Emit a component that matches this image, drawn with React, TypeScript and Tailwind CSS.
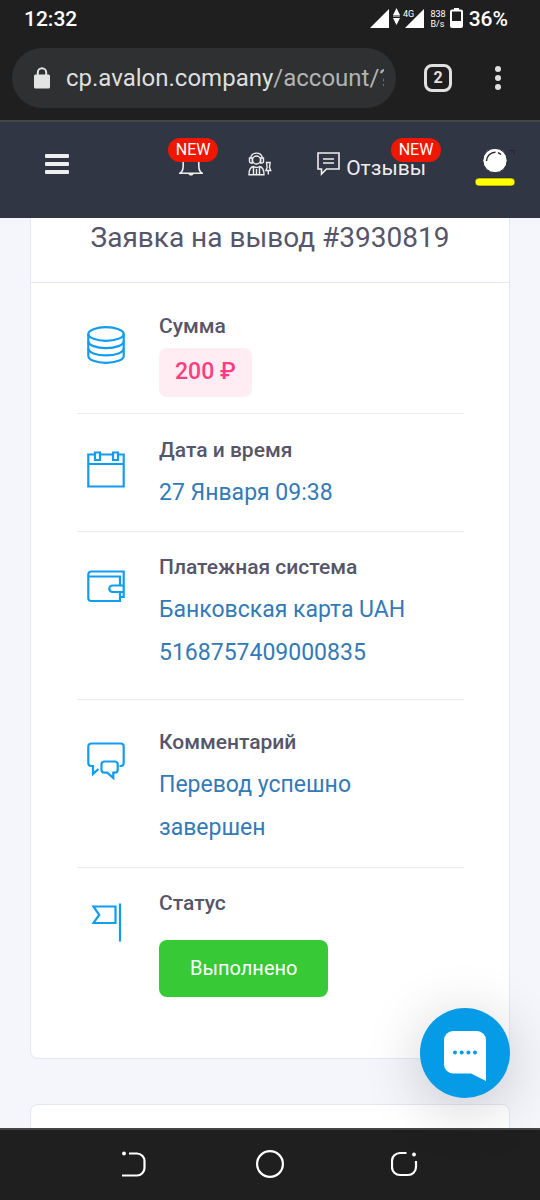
import type { ReactNode } from 'react';

const rowTitle = 'text-[21px] leading-7 font-medium text-[#575569]';
const rowValue = 'mt-[7px] text-[23px] leading-[43px] text-[#337ab7]';

function StatusBar() {
  return (
    <div className="flex h-[38px] items-center justify-between pr-8 pl-6 text-white">
      <span className="text-[21px] leading-6 font-medium">12:32</span>
      <div className="flex items-center">
        <svg width="56" height="22" viewBox="0 0 56 22" fill="currentColor">
          <path d="M0 20 19 1v19z" />
          <path d="M26.500 0 30 7h-7zM26.500 17 23 10h7zM23 7.500h7v1h-7z" />
          <path d="M35 20 54 1v19z" />
          <text x="33" y="9" fontSize="9" stroke="#1f1f1f" strokeWidth="2" paintOrder="stroke">
            4G
          </text>
        </svg>
        <span className="ml-1 flex flex-col text-[9px] leading-[10px]">
          <span>838</span>
          <span>B/s</span>
        </span>
        <svg className="ml-1" width="13" height="24" viewBox="0 0 13 24">
          <path d="M4 1h5v2H4z" fill="#fff" />
          <rect x="1" y="3.500" width="11" height="16.500" rx="1" fill="none" stroke="#fff" strokeWidth="2" />
          <path d="M1 14h11v6H1z" fill="#fff" />
        </svg>
        <span className="ml-[6px] text-[21px] leading-6 font-medium">36%</span>
      </div>
    </div>
  );
}

function BrowserBar() {
  return (
    <div className="flex h-[82px] items-center pr-7 pb-[2px] pl-3">
      <button
        type="button"
        className="flex h-[60px] min-w-0 flex-1 items-center rounded-full bg-[#2f3032] pr-3 pl-[22px] text-left"
      >
        <svg className="shrink-0" width="16" height="22" viewBox="0 0 16 22">
          <rect y="7.500" width="16" height="14" rx="1.500" fill="#e3e3e3" />
          <path d="M3.800 8V5.500a4.200 4.200 0 0 1 8.400 0V8" fill="none" stroke="#e3e3e3" strokeWidth="2" />
        </svg>
        <span className="ml-4 overflow-hidden text-2xl whitespace-nowrap text-[#dedede]">
          cp.avalon.company<span className="text-[#b3b3b3]">/account/?</span>
        </span>
      </button>
      <button
        type="button"
        className="ml-7 flex h-7 w-7 items-center justify-center rounded-lg border-3 border-[#e0e0e0] text-base leading-none font-bold text-[#e0e0e0]"
      >
        2
      </button>
      <button type="button" aria-label="Меню браузера" className="ml-8 flex w-7 justify-center">
        <svg width="6" height="24" viewBox="0 0 6 24" fill="#e0e0e0">
          <circle cx="3" cy="3" r="3" />
          <circle cx="3" cy="12" r="3" />
          <circle cx="3" cy="21" r="3" />
        </svg>
      </button>
    </div>
  );
}

function NewBadge({ className }: { className: string }) {
  return (
    <span
      className={`absolute flex h-6 w-[50px] items-center justify-center rounded-full bg-[#ef1700] text-base leading-none text-white ${className}`}
    >
      NEW
    </span>
  );
}

function SiteHeader() {
  return (
    <header className="flex h-24 shrink-0 items-center bg-[#303643] pr-6 pb-3 pl-[45px]">
      <button type="button" aria-label="Меню" className="flex w-6 flex-col gap-1">
        <span className="h-1 rounded-[1px] bg-[#eeeeee]" />
        <span className="h-1 rounded-[1px] bg-[#eeeeee]" />
        <span className="h-1 rounded-[1px] bg-[#eeeeee]" />
      </button>

      <nav className="mr-12 ml-auto flex items-center gap-[45px] text-[#eeeeee]">
        <a href="#notifications" aria-label="Уведомления" className="relative">
          <svg width="24" height="24" viewBox="0 0 24 24" fill="none" stroke="currentColor" strokeWidth="1.600">
            <path d="M1 21.200c2.500-1.500 3.200-4 3.200-7.200V9a7.800 7.800 0 0 1 15.600 0v5c0 3.200.7 5.700 3.200 7.200z" />
            <path d="M9.500 22h5c-.5 2-4.500 2-5 0z" fill="currentColor" stroke="none" />
          </svg>
          <NewBadge className="-top-[14px] -right-[15px]" />
        </a>
        <a href="#support" aria-label="Поддержка">
          <svg width="24" height="24" viewBox="0 0 24 24" fill="none" stroke="currentColor" strokeWidth="1.400">
            <circle cx="8.500" cy="8" r="4" />
            <path d="M2.600 6a6 6 0 0 1 11.800 0M1.500 6h2.800v5H3a1.500 1.500 0 0 1-1.500-1.500zM15.500 6h-2.800v5H14a1.500 1.500 0 0 0 1.500-1.500z" />
            <path d="M1 22.700c0-5.500 1.500-7.700 4.500-8.200 2 1.300 4 1.300 6 0 3 .5 4.500 2.700 4.500 8.200zM5.500 14.500v8M11.500 14.500v8M8.500 17v5.500" />
            <path d="M18.500 10.500h3.600l-.6 5 1.200 3h-4.800l1.200-3zM20.300 18.500v4" />
          </svg>
        </a>
        <a href="#reviews" className="relative flex items-center gap-[6px]">
          <svg width="23" height="24" viewBox="0 0 23 24" fill="none" stroke="currentColor" strokeWidth="1.600">
            <path d="M1 1h21v16H9.500L4.500 22v-5H1z" />
            <path d="M6 7h11M6 11h11" />
          </svg>
          <span className="pt-2 text-[21px] leading-6">Отзывы</span>
          <NewBadge className="-top-[10px] -right-[15px]" />
        </a>
      </nav>

      <button type="button" aria-label="Профиль" className="pt-2">
        <svg width="42" height="40" viewBox="0 0 42 40">
          <rect x="1" y="30" width="40" height="8" rx="4" fill="#ffff00" stroke="#23252a" strokeWidth=".6" />
          <circle cx="21" cy="12.500" r="12.200" fill="#fff" stroke="#23252a" />
          <path d="M12.500 13a9 9 0 0 1 9-8.800M24 4.700l3 1.600" fill="none" stroke="#23252a" strokeWidth="1.400" />
          <path d="M35.500 2.500H40v4" fill="none" stroke="#23252a" />
        </svg>
      </button>
    </header>
  );
}

const icons: Record<string, ReactNode> = {
  coins: (
    <>
      <ellipse cx="19" cy="8" rx="17.700" ry="6.800" />
      <path d="M1.300 8v22c0 3.800 7.900 6.800 17.700 6.800S36.700 33.800 36.700 30V8" />
      <path d="M1.300 15.300c0 3.800 7.900 6.800 17.700 6.800s17.700-3 17.700-6.800M1.300 22.600c0 3.800 7.900 6.800 17.700 6.800s17.700-3 17.700-6.800" />
    </>
  ),
  calendar: (
    <path d="M8 4.500H1.300V36.500h35.400v-32H32M13 4.500h13M1.300 14h35.400M8 2.500h5v7.500H8zM26 2.500h5v7.500h-5z" />
  ),
  wallet: (
    <>
      <path d="M1.300 9.500H33v8.500M33 25.500v8.500H4a2.700 2.700 0 0 1-2.700-2.700V7.500a3 3 0 0 1 3-3h32.400V30H33" />
      <path d="M36.700 18.500H25.500a3 3 0 0 0 0 6.500h11.200" />
    </>
  ),
  comments: (
    <>
      <path d="M32.500 24h1.200a3 3 0 0 0 3-3V4.500a3 3 0 0 0-3-3H4.300a3 3 0 0 0-3 3V21a3 3 0 0 0 3 3H6v8l5.500-5" />
      <path d="M17.500 19.500h10.200a3 3 0 0 1 3 3v5.200a3 3 0 0 1-3 3h-1.400V36l-6-5.300h-2.800a3 3 0 0 1-3-3v-5.200a3 3 0 0 1 3-3z" />
    </>
  ),
  flag: <path d="M33 .5v38M28.500 3.500V20H6.500l5.700-8.200-5.700-8.300z" />,
};

type RowProps = { icon: string; title: string; className: string; children: ReactNode };

function Row({ icon, title, className, children }: RowProps) {
  return (
    <li className={`flex gap-[34px] border-b border-[#e8eaf0] pr-3 pl-[10px] last:border-b-0 ${className}`}>
      <svg
        className="mt-[14px] shrink-0"
        width="38"
        height="39"
        viewBox="0 0 38 39"
        fill="none"
        stroke="#109cf1"
        strokeWidth="2.200"
      >
        {icons[icon]}
      </svg>
      <div className="min-w-0 flex-1">
        <h3 className={rowTitle}>{title}</h3>
        {children}
      </div>
    </li>
  );
}

function ChatButton() {
  return (
    <button
      type="button"
      aria-label="Чат"
      className="absolute right-[30px] bottom-[30px] flex h-[90px] w-[90px] items-center justify-center rounded-full bg-[#059be7] pt-[6px] shadow-[0_10px_60px_rgba(0,0,0,0.2)]"
    >
      <svg width="42" height="50" viewBox="0 0 42 50">
        <path d="M9 0h24a9 9 0 0 1 9 9v41l-15-7.500H9a9 9 0 0 1-9-9V9a9 9 0 0 1 9-9z" fill="#fff" />
        <g fill="#059be7">
          <circle cx="11" cy="21.500" r="2" />
          <circle cx="17.700" cy="21.500" r="2" />
          <circle cx="24.400" cy="21.500" r="2" />
          <circle cx="31" cy="21.500" r="2" />
        </g>
      </svg>
    </button>
  );
}

function SystemNav() {
  return (
    <footer className="flex h-[72px] shrink-0 items-center justify-between border-t-2 border-[#454545] bg-[#1f1f1f] px-[121px] pb-[2px]">
      <button type="button" aria-label="Назад">
        <svg width="28" height="28" viewBox="0 0 28 28" fill="none" stroke="#fff" strokeWidth="2.200">
          <path d="M8 3.500h8a7.500 7.500 0 0 1 7.500 7.500v7a7.500 7.500 0 0 1-7.500 7.500H1" />
          <circle cx="3" cy="3.500" r="1.900" fill="#fff" stroke="none" />
        </svg>
      </button>
      <button type="button" aria-label="Домой">
        <svg width="28" height="28" viewBox="0 0 28 28" fill="none" stroke="#fff" strokeWidth="2.200">
          <circle cx="14" cy="14" r="12.900" />
        </svg>
      </button>
      <button type="button" aria-label="Недавние">
        <svg width="28" height="28" viewBox="0 0 28 28" fill="none" stroke="#fff" strokeWidth="2.200">
          <path d="M15.500 3H9a8 8 0 0 0-8 8v6a8 8 0 0 0 8 8h8a8 8 0 0 0 8-8v-6" />
          <circle cx="23" cy="4.500" r="1.900" fill="#fff" stroke="none" />
        </svg>
      </button>
    </footer>
  );
}

export default function App() {
  return (
    <div className="flex h-screen flex-col font-[Roboto,'Noto_Sans',sans-serif]">
      <div className="shrink-0 border-b-2 border-[#454745] bg-[#1f1f1f]">
        <StatusBar />
        <BrowserBar />
      </div>

      <SiteHeader />

      <div className="relative flex min-h-0 flex-1 flex-col">
        <main className="min-h-0 flex-1 overflow-hidden bg-[#f5f6fb] px-[30px]">
          <section className="rounded-b-lg border-x border-b border-[#e3e8f4] bg-white">
            <h2 className="border-b border-[#e3e8f4] pt-[1px] pb-[25px] text-center text-[28px] leading-[38px] text-[#575569]">
              Заявка на вывод #3930819
            </h2>
            <ul className="mr-[45px] ml-[46px]">
              <Row icon="coins" title="Сумма" className="pt-[29px] pb-4">
                <span className="mt-2 inline-flex h-[49px] items-center rounded-lg bg-[#ffedf3] px-4 pb-[2px] align-top text-[23px] leading-none font-medium text-[#ff3d7f]">
                  200 ₽
                </span>
              </Row>
              <Row icon="calendar" title="Дата и время" className="pt-[22px] pb-[17px]">
                <p className={rowValue}>27 Января 09:38</p>
              </Row>
              <Row icon="wallet" title="Платежная система" className="pt-[21px] pb-[25px]">
                <p className={rowValue}>
                  Банковская карта UAH
                  <br />
                  5168757409000835
                </p>
              </Row>
              <Row icon="comments" title="Комментарий" className="pt-7 pb-[18px]">
                <p className={rowValue}>
                  Перевод успешно
                  <br />
                  завершен
                </p>
              </Row>
              <Row icon="flag" title="Статус" className="pt-[21px] pb-[61px]">
                <button
                  type="button"
                  className="mt-[23px] block h-[57px] rounded-lg bg-[#38c936] px-[31px] pb-[2px] text-xl text-white"
                >
                  Выполнено
                </button>
              </Row>
            </ul>
          </section>
          <section className="mt-[45px] h-24 rounded-t-lg border border-[#e3e8f4] bg-white" />
        </main>
        <ChatButton />
      </div>

      <SystemNav />
    </div>
  );
}
